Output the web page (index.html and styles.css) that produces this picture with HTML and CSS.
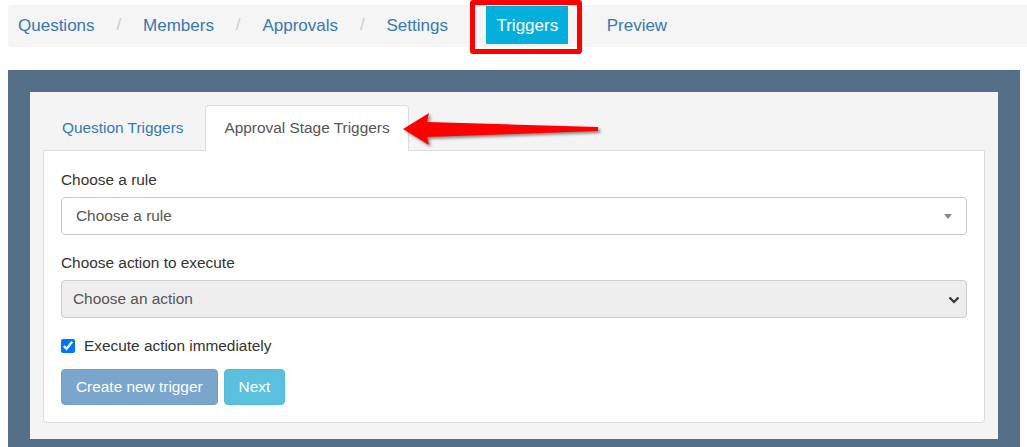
FILE: index.html
```html
<!DOCTYPE html>
<html lang="en">
<head>
  <meta charset="UTF-8">
  <title>Triggers</title>
  <link rel="stylesheet" href="styles.css">
</head>
<body>

<div class="page">
  <div class="crumbs">
    <a class="crumb" href="#">Questions</a><span class="sep">/</span>
    <a class="crumb" href="#">Members</a><span class="sep">/</span>
    <a class="crumb" href="#">Approvals</a><span class="sep">/</span>
    <a class="crumb" href="#">Settings</a><span class="sep">/</span>
    <a class="crumb active" href="#">Triggers</a><span class="sep blank"></span>
    <a class="crumb" href="#">Preview</a>
    <span class="callout"></span>
  </div>

  <div class="stage">
    <div class="panel">
      <div class="tabs">
        <a class="tab" href="#">Question Triggers</a>
        <a class="tab active" href="#">Approval Stage Triggers</a>
      </div>

      <div class="tab-body">
        <div class="group">
          <label class="label">Choose a rule</label>
          <div class="select rule">
            <span>Choose a rule</span>
            <span class="caret"></span>
          </div>
        </div>

        <div class="group">
          <label class="label">Choose action to execute</label>
          <div class="select action">
            <span>Choose an action</span>
            <svg class="chevron" width="12" height="8" viewBox="0 0 12 8">
              <polyline points="1.5,1.5 6,6 10.5,1.5" fill="none" stroke="#333" stroke-width="2.2"/>
            </svg>
          </div>
        </div>

        <label class="check">
          <input type="checkbox" checked>
          <span>Execute action immediately</span>
        </label>

        <div class="actions">
          <button class="btn btn-primary" disabled>Create new trigger</button>
          <button class="btn btn-info">Next</button>
        </div>
      </div>
    </div>
  </div>
</div>

<svg class="pointer" width="205" height="45" viewBox="0 0 205 45">
  <path d="M3 21 L29 5 L27 14 L198 19 L198 23 L27 29 L29 37 Z" fill="#f00"/>
</svg>

</body>
</html>
```

FILE: styles.css
```css
body {
  margin: 0;
  font-family: 'Liberation Sans', Arial, sans-serif;
  font-size: 15.4px;
  color: #333;
  background: #fff;
  overflow: hidden;
}

a {
  text-decoration: none;
}

.page {
  padding: 5px 0 0 8px;
}

/* breadcrumb */
.crumbs {
  position: relative;
  display: flex;
  align-items: center;
  height: 42px;
  box-sizing: border-box;
  padding: 1px 0 3px;
  background: #f5f5f5;
  border-radius: 4px 0 0 4px;
  font-size: 17px;
}

.crumb {
  padding: 1px 10px 0;
  line-height: 37px;
  color: #3778b4;
}

.crumb.active {
  background: #04afdc;
  color: #fff;
}

.sep {
  width: 28.5px;
  text-align: center;
  color: #ccc;
}

.callout {
  position: absolute;
  left: 462px;
  top: -5px;
  width: 112px;
  height: 54px;
  box-sizing: border-box;
  border: 5px solid #f00;
  border-radius: 3px;
}

/* dark frame */
.stage {
  margin: 23px 7px 0 0;
  padding: 22px 22px 22px;
  background: #566f89;
}

.panel {
  background: #f4f4f4;
  padding: 13px 13px 16px;
}

.tabs {
  display: flex;
  gap: 3px;
}

.tab {
  padding: 12px 18px 13px;
  line-height: 20px;
  color: #3778b4;
  border: 1px solid transparent;
  border-bottom: none;
  border-radius: 4px 4px 0 0;
  margin-bottom: -1px;
}

.tab.active {
  position: relative;
  background: #fff;
  color: #555;
  border-color: #ddd;
}

.tab-body {
  background: #fff;
  border: 1px solid #ddd;
  border-radius: 0 0 4px 4px;
  padding: 18px 17px 17px;
}

.group {
  margin-bottom: 17px;
}

.label {
  display: block;
  line-height: 22px;
  margin-bottom: 6px;
}

.select {
  position: relative;
  display: flex;
  align-items: center;
  height: 38px;
  box-sizing: border-box;
  border: 1px solid #ccc;
  border-radius: 4px;
  color: #555;
}

.select.rule {
  padding-left: 14px;
  background: #fff;
  border-color: #c8c8c8;
}

.select.action {
  padding-left: 11px;
  background: #eee;
}

.caret {
  position: absolute;
  right: 14px;
  top: 16px;
  border-top: 5px solid #888;
  border-left: 4px solid transparent;
  border-right: 4px solid transparent;
}

.chevron {
  position: absolute;
  right: 6px;
  top: 15px;
}

.check {
  display: flex;
  align-items: center;
  gap: 9px;
  line-height: 22px;
}

.check input {
  margin: 0;
  width: 14px;
  height: 14px;
}

.actions {
  display: flex;
  gap: 6px;
  margin-top: 12px;
}

.btn {
  height: 36px;
  padding: 0 14px;
  font-family: inherit;
  font-size: 15.4px;
  color: #fff;
  border-radius: 4px;
  border: 1px solid transparent;
}

.btn-primary {
  background: #7aa6ce;
  border-color: #72a0cb;
}

.btn-info {
  background: #5bc0de;
  border-color: #52bcdc;
}

.pointer {
  position: absolute;
  left: 400px;
  top: 108px;
  filter: drop-shadow(2px 2px 1.5px rgba(0, 0, 0, 0.45));
}
```
